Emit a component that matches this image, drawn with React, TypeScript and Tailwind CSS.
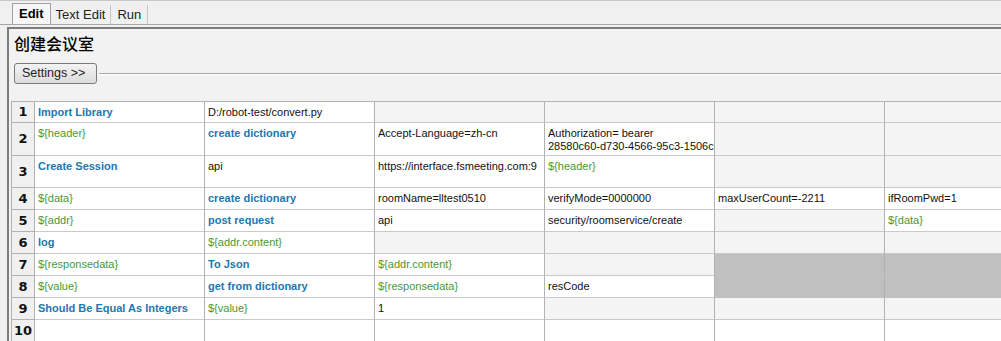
import React from "react";

// ─── Data ─────────────────────────────────────────────────────────────────────

type Kind = "kw" | "var" | "txt" | "empty" | "sel";
type Cell = { text?: string; kind: Kind };

const kw = (text: string): Cell => ({ text, kind: "kw" });
const v = (text: string): Cell => ({ text, kind: "var" });
const t = (text: string): Cell => ({ text, kind: "txt" });
const E: Cell = { kind: "empty" };
const S: Cell = { kind: "sel" };

const ROWS: { h: string; cells: Cell[] }[] = [
  { h: "h-[21px]", cells: [kw("Import Library"), t("D:/robot-test/convert.py"), E, E, E, E] },
  {
    h: "h-[33px]",
    cells: [
      v("${header}"),
      kw("create dictionary"),
      t("Accept-Language=zh-cn"),
      t("Authorization= bearer\n28580c60-d730-4566-95c3-1506cc"),
      E,
      E,
    ],
  },
  {
    h: "h-[32px]",
    cells: [kw("Create Session"), t("api"), t("https://interface.fsmeeting.com:9"), v("${header}"), E, E],
  },
  {
    h: "h-[22px]",
    cells: [
      v("${data}"),
      kw("create dictionary"),
      t("roomName=lltest0510"),
      t("verifyMode=0000000"),
      t("maxUserCount=-2211"),
      t("ifRoomPwd=1"),
    ],
  },
  { h: "h-[22px]", cells: [v("${addr}"), kw("post request"), t("api"), t("security/roomservice/create"), E, v("${data}")] },
  { h: "h-[22px]", cells: [kw("log"), v("${addr.content}"), E, E, E, E] },
  { h: "h-[22px]", cells: [v("${responsedata}"), kw("To Json"), v("${addr.content}"), E, S, S] },
  { h: "h-[22px]", cells: [v("${value}"), kw("get from dictionary"), v("${responsedata}"), t("resCode"), S, S] },
  { h: "h-[22px]", cells: [kw("Should Be Equal As Integers"), v("${value}"), t("1"), E, E, E] },
  { h: "h-[22px]", cells: [t(""), t(""), t(""), t(""), t(""), t("")] },
];

// ─── GridCell ─────────────────────────────────────────────────────────────────

function GridCell({ cell }: { cell: Cell }) {
  const bg =
    cell.kind === "empty" ? "bg-[#f4f4f4]" : cell.kind === "sel" ? "bg-[#c0c0c0]" : "bg-white";
  const color =
    cell.kind === "kw"
      ? "text-[#2277b0] font-bold"
      : cell.kind === "var"
      ? "text-[#3f9a3a]"
      : "text-[#111]";
  const border = cell.kind === "sel" ? "border-b-[#c0c0c0]" : "border-b-[#c9c9c9]";
  return (
    <div
      className={`w-[170px] shrink-0 overflow-hidden border-r border-b border-r-[#b2b2b2] ${border} ${bg} pl-[3px] pt-[4px]`}
    >
      {cell.text && (
        <div className={`whitespace-pre overflow-hidden text-[11px] leading-[13px] ${color}`}>{cell.text}</div>
      )}
    </div>
  );
}

// ─── App ──────────────────────────────────────────────────────────────────────

export default function App() {
  return (
    <div
      className="w-[1001px] h-[341px] overflow-hidden bg-[#f0f0f0] flex flex-col"
      style={{ fontFamily: '"Liberation Sans", Arial, sans-serif' }}
    >
      {/* Tabs */}
      <div className="h-[25px] shrink-0 flex items-end pl-[12px] border-t border-t-[#c8c8c8] border-b border-b-[#a7a7a7]">
        <div className="h-[21px] px-[6px] flex items-center border border-b-0 border-[#a0a0a0] bg-[#f7f7f7] text-[13px] font-bold text-black">
          Edit
        </div>
        <div className="h-[19px] px-[5px] flex items-center border-r border-[#c4c4c4] text-[13px] text-[#222]">
          Text Edit
        </div>
        <div className="h-[19px] px-[6px] flex items-center border-r border-[#c4c4c4] text-[13px] text-[#222]">
          Run
        </div>
      </div>

      {/* Panel */}
      <div className="mt-[2px] ml-[7px] flex-1 border-l-2 border-t-2 border-[#7c7c7c] bg-[#f2f2f2] flex flex-col min-h-0">
        <div
          className="pl-[5px] pt-[3px] h-[25px] text-[16px] leading-[22px] font-medium text-black"
          style={{ fontFamily: '"Noto Sans CJK SC", "Liberation Sans", sans-serif' }}
        >
          创建会议室
        </div>

        <div className="mt-[9px] flex items-center pl-[5px]">
          <button className="w-[83px] h-[21px] shrink-0 rounded-[3px] border border-[#7a7a7a] bg-gradient-to-b from-[#f3f3f3] to-[#dcdcdc] text-[12.5px] text-[#222] text-left pl-[7px]">
            Settings &gt;&gt;
          </button>
          <div className="flex-1 ml-[2px] border-t border-b border-t-[#a8a8a8] border-b-white" />
        </div>

        {/* Grid */}
        <div className="mt-[17px] ml-[2px] border-t border-l border-[#b2b2b2] flex flex-col">
          {ROWS.map((row, i) => (
            <div key={i} className={`flex shrink-0 ${row.h}`}>
              <div className="w-[23px] shrink-0 flex items-center justify-center border-r border-b border-[#b2b2b2] bg-[#f0f0f0]">
                <span
                  className="text-[13px] font-bold text-[#111]"
                  style={{ fontFamily: '"DejaVu Sans", sans-serif' }}
                >
                  {i + 1}
                </span>
              </div>
              {row.cells.map((c, j) => (
                <GridCell key={j} cell={c} />
              ))}
            </div>
          ))}
        </div>
      </div>
    </div>
  );
}
